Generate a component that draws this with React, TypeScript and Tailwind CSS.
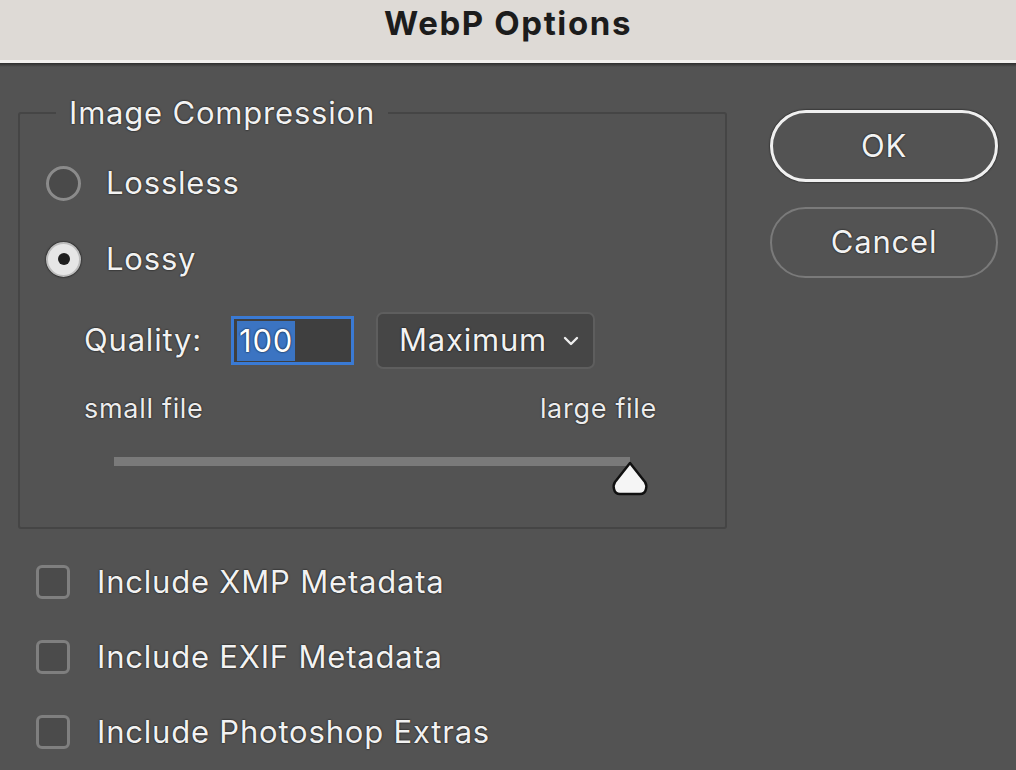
import React from 'react'

const FONT = { fontFamily: 'Inter, "Noto Sans", "Liberation Sans", sans-serif' }

const label = 'text-[31px] tracking-[0.8px] text-[#f2f2f2] [text-shadow:0_0_2px_#000]'

function Radio({ checked, text }: { checked?: boolean; text: string }) {
  return (
    <div className="flex items-center h-[40px]">
      {checked ? (
        <span className="w-[35px] h-[35px] rounded-full bg-[#e6e6e6] border-2 border-[#bdbdbd] flex items-center justify-center shadow-[0_0_2px_#000]">
          <span className="w-[12px] h-[12px] rounded-full bg-[#1e1e1e]" />
        </span>
      ) : (
        <span className="w-[35px] h-[35px] rounded-full bg-[#4a4a4a] border-[3px] border-[#8b8b8b]" />
      )}
      <span className={`ml-[25px] ${label}`}>{text}</span>
    </div>
  )
}

function Check({ text }: { text: string }) {
  return (
    <div className="flex items-center h-[40px]">
      <span className="w-[34px] h-[34px] rounded-[6px] bg-[#4b4b4b] border-[3px] border-[#7f7f7f]" />
      <span className={`ml-[27px] ${label}`}>{text}</span>
    </div>
  )
}

export default function App() {
  return (
    <div className="w-[1016px] h-[770px] overflow-hidden bg-[#535353] flex flex-col" style={FONT}>
      {/* title bar */}
      <div className="h-[60px] shrink-0 bg-[#dedad6] flex items-center justify-center pb-[14px]">
        <span className="text-[33px] leading-[40px] font-bold text-[#1c1c1c] tracking-[1.6px]">WebP Options</span>
      </div>
      <div className="h-[3px] shrink-0 bg-[#f3f1ef]" />
      <div className="h-[4px] shrink-0 bg-gradient-to-b from-[#2e2e2e] to-[#535353]" />

      <div className="flex pl-[18px] pt-[28px]">
        {/* left column */}
        <div className="w-[709px] flex flex-col">
          <fieldset className="border-2 border-[#454545] rounded-[3px] h-[434px] pl-[26px] pr-[68px]">
            <legend className={`ml-[10px] px-[13px] leading-[36px] ${label}`}>Image Compression</legend>
            <div className="flex flex-col pt-[32px]">
              <Radio text="Lossless" />
              <div className="h-[36px]" />
              <Radio checked text="Lossy" />

              <div className="flex items-center mt-[33px] pl-[38px]">
                <span className={label}>Quality:</span>
                <div className="ml-[29px] w-[123px] h-[49px] border-[3px] border-[#3a7ad4] bg-[#3f3f3f] flex items-center pl-[3px]">
                  <span className="bg-[#3b74c2] text-[31px] leading-[40px] tracking-[0.8px] text-white px-[2px] [text-shadow:0_0_2px_#000]">
                    100
                  </span>
                </div>
                <div className="ml-[22px] w-[219px] h-[57px] rounded-[7px] border-2 border-[#5e5e5e] bg-[#464646] flex items-center pl-[21px] pr-[14px] justify-between">
                  <span className={label}>Maximum</span>
                  <svg width="16" height="10" viewBox="0 0 16 10" fill="none">
                    <path d="M2 2l6 6 6-6" stroke="#eeeeee" strokeWidth="2.4" strokeLinecap="round" strokeLinejoin="round" />
                  </svg>
                </div>
              </div>

              <div className="flex justify-between items-center mt-[20px] pl-[38px] text-[27px] tracking-[0.7px] text-[#ececec] [text-shadow:0_0_2px_#000]">
                <span>small file</span>
                <span>large file</span>
              </div>

              <div className="relative mt-[27px] ml-[68px] h-[40px]">
                <div className="h-[9px] w-[516px] bg-[#7a7a7a]" />
                <svg className="absolute left-[496px] top-[3px]" width="40" height="38" viewBox="0 0 40 38">
                  <path
                    d="M20 3 L35 22 Q37 25 36 29 Q35 34 30 34 L10 34 Q5 34 4 29 Q3 25 5 22 Z"
                    fill="#f5f5f5"
                    stroke="#111"
                    strokeWidth="2.5"
                    strokeLinejoin="round"
                  />
                </svg>
              </div>
            </div>
          </fieldset>

          <div className="flex flex-col pl-[18px] pt-[33px] gap-[35px]">
            <Check text="Include XMP Metadata" />
            <Check text="Include EXIF Metadata" />
            <Check text="Include Photoshop Extras" />
          </div>
        </div>

        {/* right column */}
        <div className="ml-[43px] pt-[15px] w-[228px] flex flex-col gap-[25px]">
          <button className={`h-[72px] rounded-full border-[3px] border-[#f0f0f0] shadow-[0_0_2px_#000] ${label}`}>OK</button>
          <button className={`h-[71px] rounded-full border-2 border-[#7a7a7a] ${label}`}>Cancel</button>
        </div>
      </div>
    </div>
  )
}
